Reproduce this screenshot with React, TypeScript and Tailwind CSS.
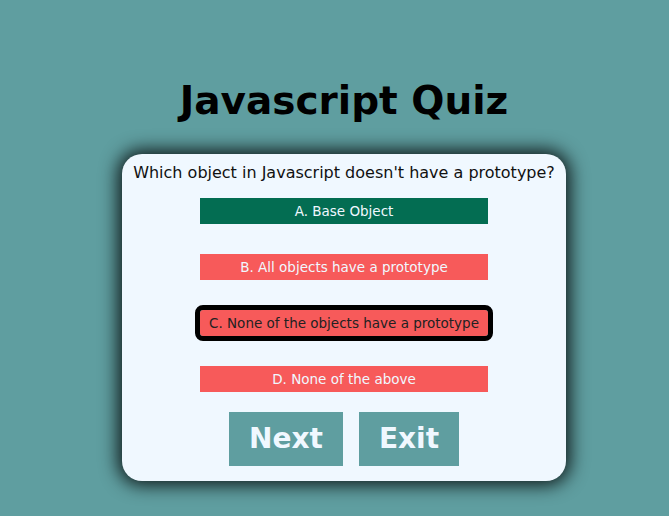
const options = [
  { label: "A. Base Object", cls: "bg-[#036d52] text-[#f0f8ff]" },
  { label: "B. All objects have a prototype", cls: "bg-[#f75a5a] text-[#f0f8ff]" },
  { label: "C. None of the objects have a prototype", cls: "bg-[#f75a5a] text-[#222] outline-[5px] outline-solid outline-black rounded-[3px]" },
  { label: "D. None of the above", cls: "bg-[#f75a5a] text-[#f0f8ff]" },
];

export default function App() {
  return (
    <div className="min-h-[516px] bg-[#5f9ea0] pl-[19px] flex flex-col items-center font-['DejaVu_Sans',Verdana,sans-serif]">
      <h1 className="mt-[78px] mb-[30px] text-[39px] leading-[46px] font-bold text-black">Javascript Quiz</h1>
      <div className="w-[444px] h-[327px] bg-[#f0f8ff] rounded-[20px] shadow-[0_0_18px_4px_rgba(0,0,0,0.85)] flex flex-col items-center pt-[9px]">
        <p className="text-[16px] leading-[20px] text-[#111]">Which object in Javascript doesn't have a prototype?</p>
        <div className="mt-[15px] flex flex-col gap-[30px]">
          {options.map((o) => (
            <div key={o.label} className={`w-[288px] h-[26px] flex items-center justify-center text-[13.5px] ${o.cls}`}>
              {o.label}
            </div>
          ))}
        </div>
        <div className="mt-[20px] flex gap-[16px]">
          <button className="w-[114px] h-[54px] bg-[#5f9ea0] text-[#f0f8ff] text-[28px] font-bold">Next</button>
          <button className="w-[100px] h-[54px] bg-[#5f9ea0] text-[#f0f8ff] text-[28px] font-bold">Exit</button>
        </div>
      </div>
    </div>
  );
}
